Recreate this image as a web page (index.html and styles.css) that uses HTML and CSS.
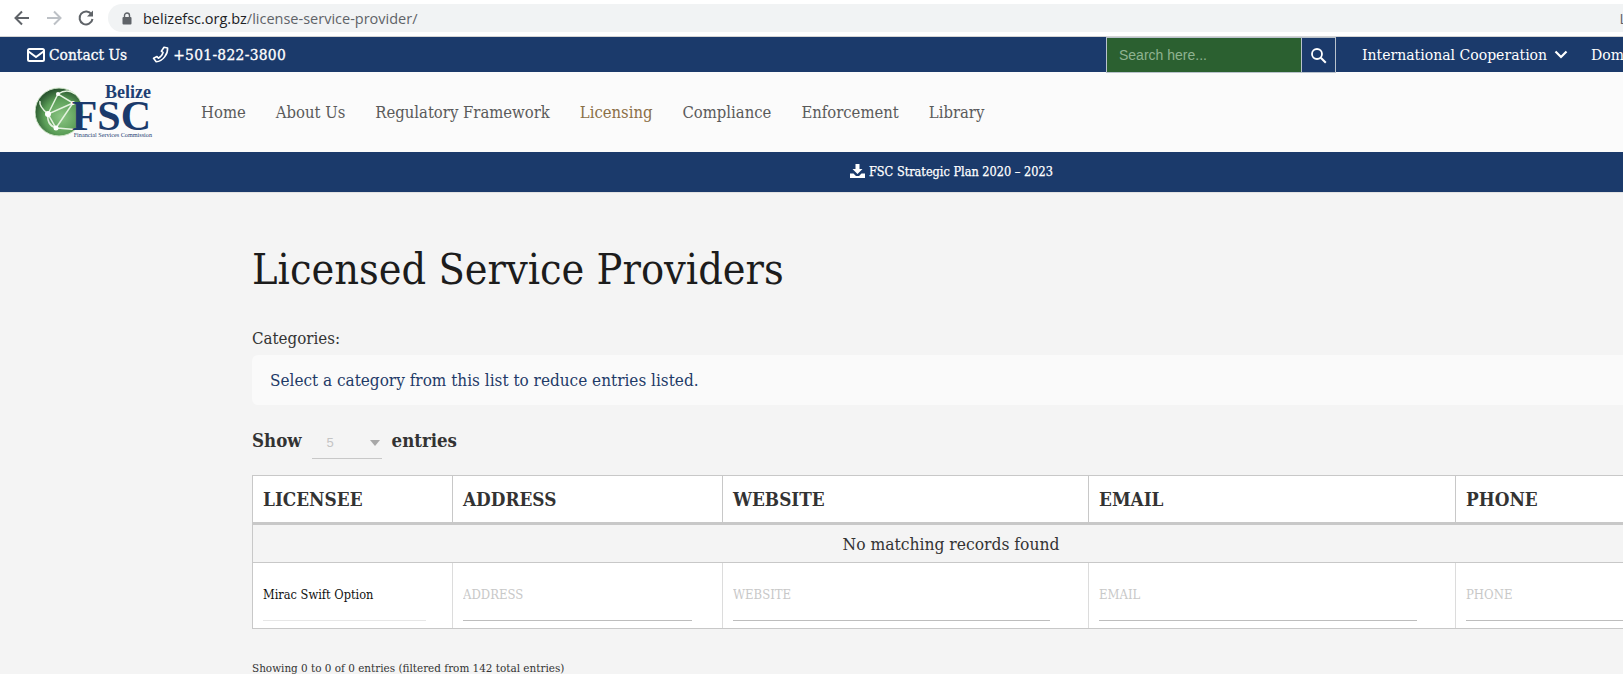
FILE: index.html
```html
<!DOCTYPE html>
<html lang="en">
<head>
    <meta charset="UTF-8">
    <meta name="viewport" content="width=device-width, initial-scale=1.0">
    <title>Licensed Service Providers - Belize FSC</title>
    <link rel="stylesheet" href="styles.css">
</head>
<body>
    <div class="browser-bar">
        <svg class="browser-icon" width="18" height="18" viewBox="0 0 18 18"><path d="M16 9H3M9 2.500 2.500 9 9 15.500" fill="none" stroke="#5f6368" stroke-width="2"/></svg>
        <svg class="browser-icon" width="18" height="18" viewBox="0 0 18 18"><path d="M2 9h13M9 2.500 15.500 9 9 15.500" fill="none" stroke="#bdc1c6" stroke-width="2"/></svg>
        <svg class="browser-icon" width="18" height="18" viewBox="0 0 18 18"><path d="M14.600 5.500A6.500 6.500 0 1 0 15.500 10" fill="none" stroke="#5f6368" stroke-width="2"/><path d="M16 1.500V7.500H10z" fill="#5f6368"/></svg>
        <div class="omnibox">
            <svg width="10" height="13" viewBox="0 0 10 13"><path d="M2.500 6V3.500a2.500 2.500 0 0 1 5 0V6" fill="none" stroke="#5f6368" stroke-width="1.400"/><rect x="0.500" y="5" width="9" height="7.500" rx="1" fill="#5f6368"/></svg>
            <span class="url"><span class="url-host">belizefsc.org.bz</span>/license-service-provider/</span>
            <span class="omnibox-end">L</span>
        </div>
    </div>

    <div class="top-bar">
        <div class="top-left">
            <a class="top-link" href="#">
                <svg width="18" height="14" viewBox="0 0 18 14"><rect x="1" y="1" width="16" height="12" rx="1.500" fill="none" stroke="#fff" stroke-width="2"/><path d="M1.500 3.500 9 9l7.500-5.500" fill="none" stroke="#fff" stroke-width="2"/></svg>
                Contact Us
            </a>
            <a class="top-link phone" href="#">
                <svg width="17" height="17" viewBox="0 0 17 17"><path d="M12 1.200 15.600 2c.4 5.800-4.500 13.300-11.400 13.800L1.500 12.300 5 10.500l1.400 1.700c2.200-1 4-3.300 4.700-5.800L9.400 5.300z" fill="none" stroke="#fff" stroke-width="1.600" stroke-linejoin="round"/></svg>
                +501-822-3800
            </a>
        </div>
        <input class="search-input" type="text" placeholder="Search here...">
        <button class="search-button" type="button">
            <svg width="17" height="17" viewBox="0 0 17 17"><circle cx="7" cy="7" r="5" fill="none" stroke="#fff" stroke-width="1.800"/><path d="m10.800 10.800 5 5" stroke="#fff" stroke-width="2"/></svg>
        </button>
        <a class="top-menu" href="#">
            International Cooperation
            <svg width="14" height="9" viewBox="0 0 14 9"><path d="M1.500 1.500 7 7l5.500-5.500" fill="none" stroke="#fff" stroke-width="2.200"/></svg>
        </a>
        <a class="top-menu" href="#">Domestic</a>
    </div>

    <div class="main-nav">
        <a class="logo" href="#">
            <svg width="122" height="58" viewBox="0 0 122 58">
                <defs>
                    <radialGradient id="globe" cx="0.550" cy="0.600" r="0.600">
                        <stop offset="0" stop-color="#8cc684"/>
                        <stop offset="0.600" stop-color="#5c9f58"/>
                        <stop offset="1" stop-color="#254f2c"/>
                    </radialGradient>
                </defs>
                <g transform="translate(-1 4)">
                    <circle cx="25" cy="27" r="24" fill="url(#globe)" stroke="#cfe5c8" stroke-width="1"/>
                    <path d="M14 29 24 9 39 18 22 43 14 29 39 18M24 9C30 5 36 5 41 9M14 29C8 24 5 20 6 16M22 43C30 43 36 45 40 44M14 29C13 36 16 41 22 43" fill="none" stroke="#e4f2df" stroke-width="1.500"/>
                    <circle cx="14" cy="29" r="3" fill="#fff"/>
                    <circle cx="22" cy="43" r="2.500" fill="#fff"/>
                    <circle cx="24" cy="9" r="2" fill="#fff"/>
                    <circle cx="39" cy="18" r="2" fill="#fff"/>
                </g>
                <text class="logo-belize" x="116" y="17" text-anchor="end">Belize</text>
                <text class="logo-fsc" x="116" y="49" text-anchor="end">FSC</text>
                <text class="logo-sub" x="117" y="56" text-anchor="end">Financial Services Commission</text>
            </svg>
        </a>
        <a class="nav-link" href="#">Home</a>
        <a class="nav-link" href="#">About Us</a>
        <a class="nav-link" href="#">Regulatory Framework</a>
        <a class="nav-link active" href="#">Licensing</a>
        <a class="nav-link" href="#">Compliance</a>
        <a class="nav-link" href="#">Enforcement</a>
        <a class="nav-link" href="#">Library</a>
    </div>

    <div class="notice-bar">
        <a class="notice-link" href="#">
            <svg width="15" height="14" viewBox="0 0 15 14"><path d="M5.500 0h4v5h3L7.500 10 2.500 5h3z" fill="#fff"/><path d="M0 9.500h3.500L6 12h3l2.500-2.500H15V14H0z" fill="#fff"/></svg>
            FSC Strategic Plan 2020 – 2023
        </a>
    </div>

    <main class="content">
        <h1 class="page-title">Licensed Service Providers</h1>

        <label class="field-label">Categories:</label>
        <div class="category-box">Select a category from this list to reduce entries listed.</div>

        <div class="length-row">
            <span>Show</span>
            <div class="length-select"><span>5</span><i class="caret"></i></div>
            <span>entries</span>
        </div>

        <table class="data-table">
            <colgroup>
                <col class="col-licensee">
                <col class="col-address">
                <col class="col-website">
                <col class="col-email">
                <col class="col-phone">
            </colgroup>
            <thead>
                <tr>
                    <th>LICENSEE</th>
                    <th>ADDRESS</th>
                    <th>WEBSITE</th>
                    <th>EMAIL</th>
                    <th>PHONE</th>
                </tr>
            </thead>
            <tbody>
                <tr>
                    <td class="empty-row" colspan="5">No matching records found</td>
                </tr>
            </tbody>
            <tfoot>
                <tr>
                    <td><input class="filter-input filled" type="text" value="Mirac Swift Option"></td>
                    <td><input class="filter-input" type="text" placeholder="ADDRESS"></td>
                    <td><input class="filter-input" type="text" placeholder="WEBSITE"></td>
                    <td><input class="filter-input" type="text" placeholder="EMAIL"></td>
                    <td><input class="filter-input" type="text" placeholder="PHONE"></td>
                </tr>
            </tfoot>
        </table>

        <p class="table-info">Showing 0 to 0 of 0 entries (filtered from 142 total entries)</p>
    </main>
</body>
</html>
```

FILE: styles.css
```css
* {
    margin: 0;
    padding: 0;
    box-sizing: border-box;
}

:root {
    --navy: #1b3a6b;
    --page-bg: #f4f4f4;
    --line: #c8c8c8;
    --serif: "DejaVu Serif Condensed", "DejaVu Serif", "Liberation Serif", serif;
}

html,
body {
    height: 100%;
    overflow: hidden;
}

body {
    width: 1623px;
    background-color: var(--page-bg);
    font-family: var(--serif);
    font-stretch: condensed;
    color: #2b2b2b;
}

a {
    text-decoration: none;
}

/* browser toolbar */
.browser-bar {
    height: 37px;
    background: #fff;
    border-bottom: 1px solid #d4d4d4;
    display: flex;
    align-items: center;
    padding-left: 13px;
    gap: 14px;
}

.browser-bar .browser-icon {
    flex: none;
}

.omnibox {
    flex: 1;
    height: 28px;
    margin-left: -1px;
    border-radius: 14px 0 0 14px;
    background: #f1f3f4;
    display: flex;
    align-items: center;
    padding-left: 14px;
    font-family: "Open Sans", sans-serif;
    font-stretch: normal;
    font-size: 14.500px;
    color: #5f6368;
}

.url {
    margin-left: 11px;
}

.url-host {
    color: #202124;
}

.omnibox-end {
    margin-left: auto;
    margin-right: -4px;
}

/* dark top strip */
.top-bar {
    height: 35px;
    background: var(--navy);
    display: flex;
    align-items: stretch;
    white-space: nowrap;
}

.top-left {
    flex: none;
    width: 1106px;
    display: flex;
    align-items: center;
    padding-left: 27px;
    gap: 25px;
}

.top-link {
    display: flex;
    align-items: center;
    gap: 4px;
    color: #fff;
    font-size: 15.400px;
    -webkit-text-stroke: 0.3px #fff;
}

.top-link.phone {
    letter-spacing: 0.3px;
}

.search-input {
    flex: none;
    width: 196px;
    border: 1px solid #b9c2cc;
    height: 36px;
    background: #2b6030;
    padding-left: 12px;
    font-family: "Liberation Sans", sans-serif;
    font-size: 14px;
    color: #fff;
}

.search-input::placeholder {
    color: #8fb391;
    opacity: 1;
}

.search-button {
    flex: none;
    width: 35px;
    height: 36px;
    margin-left: -1px;
    border: 1px solid #b9c2cc;
    background: var(--navy);
    display: flex;
    align-items: center;
    justify-content: center;
}

.top-menu {
    flex: none;
    display: flex;
    align-items: center;
    gap: 7px;
    color: #fff;
    font-size: 15.600px;
    margin-left: 26px;
}

.top-menu + .top-menu {
    margin-left: 23px;
}

/* main nav */
.main-nav {
    height: 80px;
    background: #fbfbfb;
    display: flex;
    align-items: center;
    padding-left: 34px;
    gap: 30px;
}

.logo {
    flex: none;
    width: 136px;
    height: 58px;
    margin-top: -4px;
    margin-left: 1px;
}

.logo-belize {
    font-family: "Liberation Serif", serif;
    font-weight: 700;
    font-size: 18px;
    fill: #1f3f73;
}

.logo-fsc {
    font-family: "Liberation Serif", serif;
    font-weight: 700;
    font-size: 42px;
    fill: #1b3a6b;
}

.logo-sub {
    font-family: "Liberation Serif", serif;
    font-size: 6.200px;
    fill: #1f3f73;
}

.nav-link {
    color: #5a5a5a;
    font-size: 16.500px;
}

.nav-link.active {
    color: #8b6f47;
}

/* notice strip */
.notice-bar {
    height: 41px;
    background: var(--navy);
    border-bottom: 1px solid #e2e2e2;
    display: flex;
    align-items: center;
    padding-left: 850px;
}

.notice-link {
    display: flex;
    align-items: center;
    gap: 4px;
    margin-top: -2px;
    color: #fff;
    font-size: 12.600px;
    -webkit-text-stroke: 0.25px #fff;
}

/* page body */
.content {
    width: 1398px;
    margin-left: 252px;
}

.page-title {
    margin-top: 48px;
    font-size: 42.800px;
    font-weight: 400;
    line-height: 56px;
    color: #1c1c1c;
}

.field-label {
    display: block;
    margin-top: 30px;
    font-size: 16.800px;
    line-height: 22px;
    color: #333;
}

.category-box {
    margin-top: 6px;
    height: 50px;
    padding-left: 18px;
    display: flex;
    align-items: center;
    background: #fafafa;
    border-radius: 6px;
    font-size: 17px;
    color: #1f3a68;
}

.length-row {
    margin-top: 16px;
    height: 38px;
    display: flex;
    align-items: center;
    gap: 10px;
    font-size: 18.500px;
    font-weight: 700;
    color: #333;
}

.length-select {
    width: 70px;
    height: 38px;
    border-bottom: 1px solid var(--line);
    display: flex;
    align-items: center;
    justify-content: space-between;
    padding: 6px 2px 0 15px;
    font-family: "Liberation Sans", sans-serif;
    font-size: 13px;
    font-weight: 400;
    color: #c4c4c4;
}

.caret {
    width: 0;
    height: 0;
    border-left: 5px solid transparent;
    border-right: 5px solid transparent;
    border-top: 6px solid #a8a8a8;
}

.data-table {
    width: 100%;
    margin-top: 16px;
    border-collapse: collapse;
    table-layout: fixed;
}

.col-licensee {
    width: 200px;
}

.col-address {
    width: 270px;
}

.col-website {
    width: 366px;
}

.col-email {
    width: 367px;
}

.data-table th {
    height: 48px;
    padding-left: 10px;
    background: #fff;
    border: 1px solid var(--line);
    border-bottom: 3px solid var(--line);
    text-align: left;
    font-size: 18.800px;
    color: #333;
}

.empty-row {
    height: 39px;
    border: 1px solid var(--line);
    text-align: center;
    font-size: 17.300px;
    color: #333;
}

.data-table tfoot td {
    height: 66px;
    padding: 12px 0 7px 10px;
    background: #fff;
    border-right: 1px solid #dcdcdc;
    border-bottom: 1px solid var(--line);
}

.data-table tfoot td:first-child {
    border-left: 1px solid var(--line);
}

.filter-input {
    width: 89.200%;
    height: 46px;
    padding-bottom: 7px;
    border: 0;
    border-bottom: 1px solid #bdbdbd;
    background: transparent;
    font-family: var(--serif);
    font-stretch: condensed;
    font-size: 13px;
    color: #111;
}

.data-table tfoot td:nth-child(2) .filter-input {
    width: 88.500%;
}

.filter-input.filled {
    width: 86.500%;
    font-size: 12.700px;
    border-bottom-color: #e6e6e6;
}

.filter-input::placeholder {
    color: #c8c8c8;
    opacity: 1;
}

.table-info {
    margin-top: 32px;
    font-size: 11.600px;
    color: #333;
}
```
